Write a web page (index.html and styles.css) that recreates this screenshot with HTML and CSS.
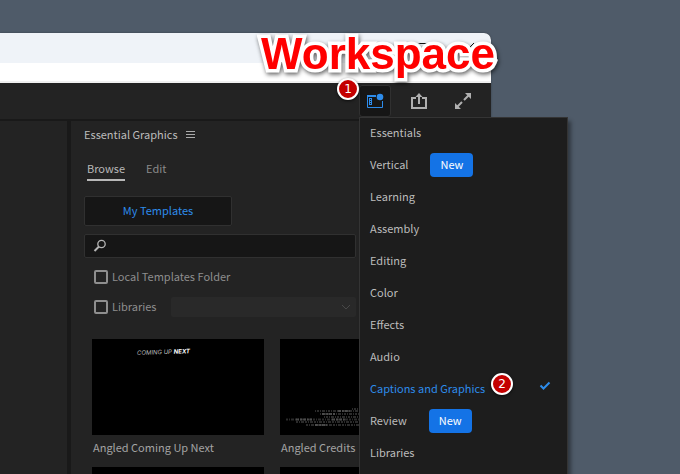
FILE: index.html
```html
<!DOCTYPE html>
<html lang="en">
<head>
<meta charset="utf-8">
<title>Workspace menu</title>
<link rel="stylesheet" href="styles.css">
</head>
<body>
<main class="window">
  <header class="titlebar">
    <svg class="winctl" viewBox="0 0 12 12" aria-hidden="true"><rect x="1.5" y="1.5" width="9" height="9" rx="1"/></svg>
    <svg class="winctl" viewBox="0 0 12 12" aria-hidden="true"><path d="M1 1l10 10M11 1L1 11"/></svg>
  </header>
  <div class="menubar"></div>
  <div class="toolbar">
    <div class="workspace">
      <button class="tool active" aria-label="Workspaces" aria-expanded="true">
        <svg width="18" height="18" viewBox="0 0 18 18" fill="none" stroke="#2d8ceb" stroke-width="1">
          <path d="M1 3h9v2H1z" fill="#2d8ceb" stroke="none"/>
          <path d="M1.500 4v11.500h15V9"/>
          <path d="M3 6h3v7H3zM4 7v1h1V7zM4 9v1h1V9zM4 11v1h1v-1z" fill="#2d8ceb" fill-rule="evenodd" stroke="none"/>
          <circle cx="14" cy="5" r="3.300" fill="#2d8ceb" stroke="none"/>
        </svg>
      </button>
      <span class="step step-one">1</span>
      <strong class="callout">Workspace</strong>
      <ul class="menu">
        <li><button class="item">Essentials</button></li>
        <li><button class="item">Vertical <span class="new">New</span></button></li>
        <li><button class="item">Learning</button></li>
        <li><button class="item">Assembly</button></li>
        <li><button class="item">Editing</button></li>
        <li><button class="item">Color</button></li>
        <li><button class="item">Effects</button></li>
        <li><button class="item">Audio</button></li>
        <li><button class="item selected">Captions and Graphics
          <svg class="check" width="12" height="10" viewBox="0 0 12 10" fill="none" stroke="#2d8ceb" stroke-width="2"><path d="M1.500 4.500l3 3L10.500 1.500"/></svg></button>
          <span class="step step-two">2</span></li>
        <li><button class="item">Review <span class="new">New</span></button></li>
        <li><button class="item">Libraries</button></li>
      </ul>
    </div>
    <button class="tool" aria-label="Quick export">
      <svg width="18" height="18" viewBox="0 0 18 18" fill="none" stroke="#b0b0b0" stroke-width="2"><path d="M6 6H2v10h14V6h-4M9 12V3"/><path d="M5.500 5L9 1l3.500 4z" fill="#b0b0b0" stroke="none"/></svg>
    </button>
    <button class="tool" aria-label="Full screen">
      <svg width="18" height="18" viewBox="0 0 18 18" fill="none" stroke="#b0b0b0" stroke-width="2"><path d="M10 8l5-5M8 10l-5 5"/><path d="M11 1h6v6zM1 11v6h6z" fill="#b0b0b0" stroke="none"/></svg>
    </button>
  </div>
  <div class="panels">
    <section class="side"></section>
    <section class="panel">
      <div class="heading">
        <h1>Essential Graphics</h1>
        <svg width="9" height="7" viewBox="0 0 9 7" stroke="#aaa"><path d="M0 .5h9M0 3.500h9M0 6.500h9"/></svg>
      </div>
      <div class="tabs">
        <button class="tab current">Browse</button>
        <button class="tab">Edit</button>
      </div>
      <div class="filters">
        <button class="templates">My Templates</button>
        <label class="search">
          <svg width="14" height="14" viewBox="0 0 14 14" fill="none" stroke="#b5b5b5"><circle cx="8.500" cy="5" r="3.700" stroke-width="1.300"/><path d="M6 7.500l-4.500 4.500" stroke-width="2"/></svg>
          <input type="search" aria-label="Search templates">
        </label>
        <div class="option"><input type="checkbox" id="local"><label for="local">Local Templates Folder</label></div>
        <div class="option"><input type="checkbox" id="libs"><label for="libs">Libraries</label>
          <div class="pick"><select aria-label="Library" disabled></select>
          <svg width="10" height="6" viewBox="0 0 10 6" fill="none" stroke="#484848"><path d="M1 1l4 4 4-4"/></svg></div>
        </div>
      </div>
      <div class="gallery">
        <figure>
          <svg class="thumb" viewBox="0 0 172 96"><text class="next-art" x="45" y="16" transform="rotate(-2 45 16)">COMING UP <tspan class="heavy">NEXT</tspan></text></svg>
          <figcaption>Angled Coming Up Next</figcaption>
        </figure>
        <figure>
          <svg class="thumb" viewBox="0 0 172 96" fill="none" stroke="#555" stroke-width="2">
            <path stroke-dasharray="1 1 2 1 1 1 3 1" opacity=".5" d="M72 70h30M35 72h60M40 75h60M44 78h50"/>
            <path stroke-dasharray="2 1 1 1 3 1" opacity=".5" d="M6 80.500h86M16 83h80M26 86h70"/>
            <path stroke-dasharray="3 1 2 1" opacity=".8" d="M58 72h12M42 75h14M16 80.500h16M52 80.500h14M35 86h12"/>
          </svg>
          <figcaption>Angled Credits</figcaption>
        </figure>
        <figure><svg class="thumb" viewBox="0 0 172 96"></svg></figure>
        <figure><svg class="thumb" viewBox="0 0 172 96"></svg></figure>
      </div>
    </section>
  </div>
</main>
</body>
</html>
```
FILE: styles.css
```css
* { box-sizing: border-box; }
body {
  margin: 0;
  height: 100vh;
  overflow: hidden;
  padding: 33px 189px 0 0;
  background: #4f5b69;
  color: #bcbcbc;
  font: 11px/16px "Noto Sans CJK SC", sans-serif;
}
button, input, select { font: inherit; color: inherit; margin: 0; }
button { border: 0; padding: 0; background: none; }
svg { display: block; flex: none; }

.window {
  height: 100%;
  display: flex;
  flex-direction: column;
  border-radius: 0 7px 0 0;
  background: #191919;
  box-shadow: 0 0 2px #333b46;
}
.titlebar {
  height: 30px;
  display: flex;
  align-items: center;
  justify-content: flex-end;
  gap: 34px;
  padding: 0 16px 0 0;
  background: #eff3f8;
  border-radius: 0 7px 0 0;
}
.winctl { width: 12px; fill: none; stroke: #111; }
.menubar { height: 20px; background: #fff; border-bottom: 2px solid #f0f0f0; }
.toolbar {
  height: 36px;
  display: flex;
  align-items: center;
  justify-content: flex-end;
  gap: 12px;
  padding-right: 12px;
  background: #232323;
}
.workspace { position: relative; }
.tool {
  width: 32px;
  height: 32px;
  display: flex;
  align-items: center;
  justify-content: center;
}
.active { background: #161616; border: 1px solid #303030; border-radius: 3px; }

.callout {
  position: absolute;
  right: -104px;
  top: -56px;
  font: bold 44px/50px "Liberation Sans", sans-serif;
  color: #f00;
  -webkit-text-stroke: 7px #fff;
  paint-order: stroke fill;
  stroke-linejoin: round;
  filter: drop-shadow(1px 2px 2px #0009);
}
.step {
  position: absolute;
  width: 22px;
  height: 22px;
  border: 2px solid #fff;
  border-radius: 50%;
  background: #c40000;
  color: #fff;
  font: 12px/18px "DejaVu Sans", sans-serif;
  text-align: center;
  box-shadow: 0 1px 3px #000a;
}
.step-one { left: -22px; top: -7px; }
.step-two { left: 131px; top: -1px; }

.menu {
  position: absolute;
  top: 100%;
  left: 0;
  width: 209px;
  height: calc(100vh - 117px);
  margin: 0;
  padding: 0;
  list-style: none;
  background: #1d1d1d;
  border: 1px solid #343434;
  border-bottom: 0;
  box-shadow: 3px 4px 4px #0006;
}
.menu li { position: relative; }
.item {
  width: 100%;
  height: 32px;
  display: flex;
  align-items: center;
  gap: 22px;
  padding: 0 16px 4px 10px;
}
.selected { color: #2d8ceb; justify-content: space-between; }
.check { margin-bottom: 4px; }
.new {
  margin-top: 2px;
  padding: 3px 10px 5px;
  border-radius: 4px;
  background: #1473e6;
  color: #fff;
}

.panels {
  flex: 1;
  min-height: 0;
  overflow: hidden;
  display: flex;
  gap: 4px;
  padding-top: 2px;
}
.side { width: 67px; background: #232323; }
.panel { flex: 1; min-width: 0; padding: 5px 13px 0; background: #232323; }
.heading { display: flex; align-items: center; gap: 8px; }
.heading h1 { margin: 0; font: inherit; }
.tabs { display: flex; gap: 21px; padding: 17px 0 0 3px; }
.tab { height: 22px; padding-bottom: 4px; color: #8a8a8a; }
.current { color: #b8b8b8; border-bottom: 2px solid #b8b8b8; padding-bottom: 2px; }
.filters { margin-right: 122px; padding-top: 15px; color: #8e8e8e; }
.templates {
  display: block;
  width: 148px;
  height: 30px;
  padding-bottom: 2px;
  background: #161616;
  border: 1px solid #303030;
  border-radius: 2px;
  color: #2d8ceb;
}
.search {
  display: flex;
  align-items: center;
  height: 24px;
  margin: 8px 0;
  padding-left: 8px;
  background: #161616;
  border: 1px solid #303030;
  border-radius: 2px;
}
.search input { flex: 1; min-width: 0; border: 0; background: none; outline: 0; }
.option { display: flex; align-items: center; height: 22px; margin: 0 0 8px 10px; }
.option > input {
  appearance: none;
  width: 14px;
  height: 14px;
  margin-right: 4px;
  border: 2px solid #8e8e8e;
  border-radius: 2px;
}
.option > label { padding-bottom: 2px; }
.pick { flex: 1; position: relative; margin-left: 14px; }
.pick select {
  display: block;
  appearance: none;
  width: 100%;
  height: 20px;
  border: 0;
  border-radius: 2px;
  background: #292929;
  opacity: 1;
}
.pick svg { position: absolute; right: 5px; top: 7px; }
.gallery {
  display: grid;
  grid-template-columns: 172px 172px;
  gap: 11px 16px;
  padding: 13px 0 0 8px;
}
figure { margin: 0; height: 117px; }
.thumb { width: 172px; height: 96px; background: #000; }
figcaption { padding: 4px 0 0 1px; color: #a4a4a4; }
.next-art { font: italic 6px Inter, sans-serif; fill: #bbb; }
.heavy { font-weight: bold; fill: #fff; }
```
